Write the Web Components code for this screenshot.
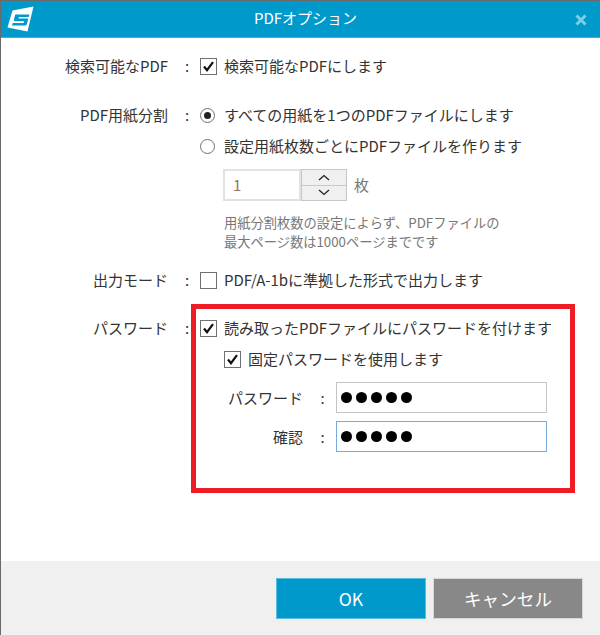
<!DOCTYPE html>
<html lang="ja"><head><meta charset="utf-8"><style>
html,body{margin:0;padding:0;background:#fff}
body{width:600px;height:635px;overflow:hidden;font:15px "Noto Sans CJK JP","Noto Sans",sans-serif;color:#333}
</style></head><body>
<pdf-dialog>
  <opt-row label="検索可能なPDF" style="margin-top:18px"><opt-check checked>検索可能なPDFにします</opt-check></opt-row>
  <opt-row label="PDF用紙分割" style="margin-top:29px">
    <opt-radio checked>すべての用紙を1つのPDFファイルにします</opt-radio>
    <opt-radio style="margin-top:11px">設定用紙枚数ごとにPDFファイルを作ります</opt-radio>
    <opt-spin style="margin-top:13px"></opt-spin>
    <opt-note style="margin-top:12px">用紙分割枚数の設定によらず、PDFファイルの<br>最大ページ数は1000ページまでです</opt-note>
  </opt-row>
  <opt-row label="出力モード" style="margin-top:19px"><opt-check>PDF/A-1bに準拠した形式で出力します</opt-check></opt-row>
  <opt-row label="パスワード" style="margin-top:28px">
    <opt-check checked>読み取ったPDFファイルにパスワードを付けます</opt-check>
    <opt-check checked style="margin:11px 0 0 24px">固定パスワードを使用します</opt-check>
    <opt-pass label="パスワード" style="margin-top:13px"></opt-pass>
    <opt-pass label="確認" focused style="margin-top:8px"></opt-pass>
  </opt-row>
</pdf-dialog>
<script>
const def=(n,html,init)=>customElements.define(n,class extends HTMLElement{
  connectedCallback(){if(this.shadowRoot)return;const s=this.attachShadow({mode:'open'});s.innerHTML=html;init&&init.call(this,s)}
});
def('pdf-dialog',`<style>
:host{display:flex;flex-direction:column;width:600px;height:635px;box-sizing:border-box;position:relative;border-left:1px solid #6a6a6a;border-top:1px solid #6a6a6a}
.title{flex:none;background:#0099cc;border-bottom:1px solid #3fb0d8;display:flex;align-items:center;justify-content:center;color:#fff;font-size:15px;position:relative;padding:0 0 4px 10px;box-sizing:content-box;height:32px}
.logo{position:absolute;left:6px;top:5px}
.x{position:absolute;right:13px;top:13px}
.body{flex:1;min-height:0}
.foot{height:74px;flex:none;background:#f0f0f0;display:flex;justify-content:flex-end;align-items:flex-start;gap:7px;padding:17px 17px 0 0;box-sizing:border-box}
button{all:unset;box-sizing:border-box;width:150px;height:41px;display:flex;align-items:center;justify-content:center;color:#fff;font:17.6px "Noto Sans CJK JP",sans-serif;border:1px solid #d8d8d8}
.ok{background:#0099cc;border-color:#5cbcdc}.cancel{background:#888}
.red{position:absolute;left:190px;top:303px;width:384px;height:189px;box-sizing:border-box;border:5px solid #ee1c25;pointer-events:none}
</style>
<div class="title"><svg class="logo" width="28" height="28" viewBox="0 0 28 28"><path d="M5.5 4.5 26.5 .5 20.5 25.5 .5 21.5Z" fill="#fff"/><path d="M8.5 8.5H22.5L21.6 11H12L11.5 12.5H20C21 12.5 21.3 13.2 21 14L19.8 18C19.5 19 18.8 19.5 17.8 19.5H4.8L5.8 17H16.7L17.2 15.2H8.2C7 15.2 6.7 14.5 7 13.5L7.8 10C8 9 8.2 8.5 8.5 8.5Z" fill="#0099cc"/></svg>PDFオプション<svg class="x" width="12" height="12" viewBox="0 0 12 12"><path d="M1.5 1.5 10.5 10.5M10.5 1.5 1.5 10.5" stroke="#7fcde6" stroke-width="3"/></svg></div>
<div class="body"><slot></slot></div>
<div class="foot"><button class="ok">OK</button><button class="cancel">キャンセル</button></div>
<div class="red"></div>`);
def('opt-row',`<style>
:host{display:grid;grid-template-columns:167px 32px 1fr;line-height:20px}
.l{text-align:right}.c{text-align:center;padding-left:6px}
</style><div class="l"></div><div class="c">:</div><div><slot></slot></div>`,function(s){s.querySelector('.l').textContent=this.getAttribute('label')});
def('opt-check',`<style>
:host{display:flex;align-items:center;gap:7px;height:20px;white-space:nowrap}
.b{width:17px;height:17px;box-sizing:border-box;border:1px solid #707070;background:#fff;flex:none;display:block}
</style><span class="b"></span><slot></slot>`,function(s){if(this.hasAttribute('checked'))s.querySelector('.b').innerHTML='<svg width="15" height="15" viewBox="0 0 15 15" style="display:block"><path d="M3 7.5 6 11.2 12 3.2" fill="none" stroke="#111" stroke-width="2.2"/></svg>'});
def('opt-radio',`<style>
:host{display:flex;align-items:center;gap:9px;height:20px;white-space:nowrap}
svg{flex:none;display:block}
</style><svg width="15" height="15" viewBox="0 0 15 15"><circle cx="7.5" cy="7.5" r="7" fill="#fff" stroke="#707070"/><circle class="d" cx="7.5" cy="7.5" r="3.5" fill="#222"/></svg><slot></slot>`,function(s){if(!this.hasAttribute('checked'))s.querySelector('.d').remove()});
def('opt-spin',`<style>
:host{display:flex;align-items:center;margin-left:23px;height:32px;color:#777}
.v{width:78px;height:32px;box-sizing:border-box;border:2px solid #e2e2e2;padding-left:8px;line-height:28px;color:#8a7570}
.a{width:46px;height:32px;display:flex;flex-direction:column;box-sizing:border-box;border:1px solid #c8c8c8;background:#c8c8c8}
.a span{flex:1;background:#f0f0f0;display:flex;align-items:center;justify-content:center}
.a span+span{margin-top:1px}
.u{margin-left:7px}
</style><div class="v">1</div><div class="a"><span><svg width="12" height="7" viewBox="0 0 12 7"><path d="M1 6 6 1.5 11 6" fill="none" stroke="#222" stroke-width="1.3"/></svg></span><span><svg width="12" height="7" viewBox="0 0 12 7"><path d="M1 1 6 5.5 11 1" fill="none" stroke="#222" stroke-width="1.3"/></svg></span></div><span class="u">枚</span>`);
def('opt-note',`<style>:host{display:block;margin-left:24px;color:#777;font-size:13.25px;line-height:19px;white-space:nowrap}</style><slot></slot>`);
def('opt-pass',`<style>
:host{display:grid;grid-template-columns:103px 33px 211px;align-items:center;height:31px}
.l{text-align:right}.c{text-align:center;padding-left:6px}
.i{height:31px;box-sizing:border-box;border:1px solid #c4c4c4;display:flex;align-items:center;gap:4px;padding-left:4px}
.i.f{border-color:#7aa9dc}
.i b{width:11px;height:11px;border-radius:50%;background:#000;display:block}
</style><div class="l"></div><div class="c">:</div><div class="i"><b></b><b></b><b></b><b></b><b></b></div>`,function(s){s.querySelector('.l').textContent=this.getAttribute('label');if(this.hasAttribute('focused'))s.querySelector('.i').classList.add('f')});
</script></body></html>
